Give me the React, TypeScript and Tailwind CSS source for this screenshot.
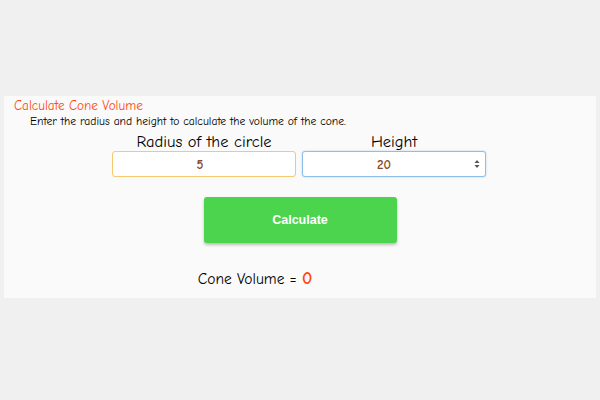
import { useState } from "react";

const comic = "font-['Comic_Sans_MS','Comic_Neue','DejaVu_Sans',sans-serif]";

export default function App() {
  const [radius, setRadius] = useState("5");
  const [height, setHeight] = useState("20");
  const [volume, setVolume] = useState(0);

  const calculate = () => {
    const r = parseFloat(radius) || 0;
    const h = parseFloat(height) || 0;
    setVolume(Math.round(((Math.PI * r * r * h) / 3) * 100) / 100);
  };

  return (
    <div className={`w-[600px] h-[400px] bg-[#f0f0f0] pt-[96px] px-[4px] ${comic}`}>
      <div className="bg-[#fafafa] h-[202px] pt-[2px]">
        <h1 className="text-[13.2px] leading-[16px] text-[#ff4a12] pl-[10px] font-medium">
          Calculate Cone Volume
        </h1>
        <p className="text-[11.6px] leading-[15px] text-black pl-[26px] font-medium">
          Enter the radius and height to calculate the volume of the cone.
        </p>
        <div className="flex justify-center gap-[6px] mt-[4px] pr-[2px]">
          <label className="flex flex-col items-center w-[184px]">
            <span className="text-[16.5px] leading-[18px] text-black">Radius of the circle</span>
            <input
              type="text"
              value={radius}
              onChange={(e) => setRadius(e.target.value)}
              className="w-full h-[26px] border border-[#f7c96e] rounded-[3px] bg-white text-center text-[13px] font-bold text-[#8b4a2a] outline-none pr-[8px]"
            />
          </label>
          <label className="flex flex-col items-center w-[184px]">
            <span className="text-[16.5px] leading-[18px] text-black">Height</span>
            <div className="relative w-full">
              <input
                type="text"
                value={height}
                onChange={(e) => setHeight(e.target.value)}
                className="w-full h-[26px] border border-[#8fbfe8] rounded-[3px] bg-white text-center text-[13px] font-bold text-[#8b4a2a] outline-none pr-[20px] shadow-[0_0_2px_rgba(120,170,230,0.6)]"
              />
              <svg
                className="absolute right-[6px] top-[8px]"
                width="6"
                height="10"
                viewBox="0 0 6 10"
              >
                <path d="M3 1 L5.5 4 H0.5 Z" fill="#555" />
                <path d="M3 9 L5.5 6 H0.5 Z" fill="#555" />
              </svg>
            </div>
          </label>
        </div>
        <div className="flex justify-center mt-[20px]">
          <button
            onClick={calculate}
            className="w-[193px] h-[46px] bg-[#4cd44e] rounded-[3px] shadow-[0_2px_3px_rgba(0,0,0,0.25)] text-white text-[12.5px] font-bold font-['Liberation_Sans',Arial,sans-serif]"
          >
            Calculate
          </button>
        </div>
        <div className="flex justify-center items-baseline mt-[22px] pr-[90px]">
          <span className="text-[15.5px] text-black font-medium">Cone Volume =&nbsp;</span>
          <span className="text-[18px] text-[#ff4a12] font-bold">{volume}</span>
        </div>
      </div>
    </div>
  );
}
